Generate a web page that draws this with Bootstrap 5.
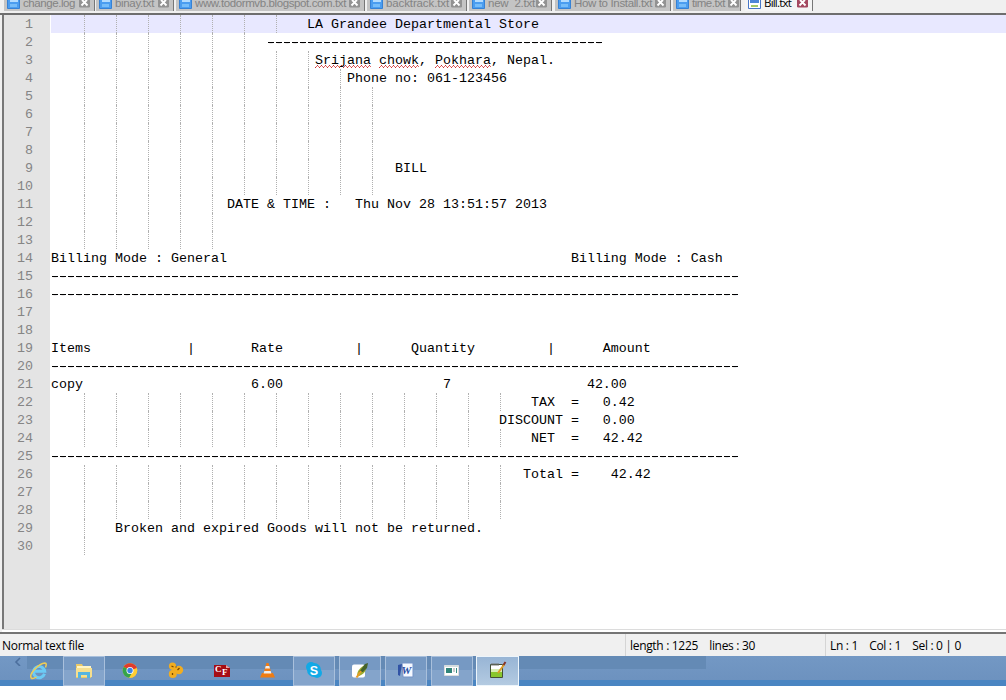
<!DOCTYPE html>
<html lang="en">
<head>
<meta charset="utf-8">
<title>Bill.txt</title>
<link href="https://cdn.jsdelivr.net/npm/bootstrap@5.3.0/dist/css/bootstrap.min.css" rel="stylesheet">
<style>
body{width:1006px;height:700px;background:#fff;font-family:"Liberation Sans",sans-serif}
.tabstrip{height:13px;background:#f0f0f0}
.ftab{height:11px;background:#c4c4c4;color:#838383;font-size:11.5px;border-right:1px solid #777;padding-left:3px;position:relative}
.ftab.on{background:#f4f4f4;color:#000;font-family:"Open Sans",sans-serif}
.ftab svg{flex:none}
.ftab .lbl{line-height:14px;margin-top:-4px;height:15px;margin-left:3px}
.ftab .x{position:absolute;right:4px;top:0}
.fit{white-space:pre;display:inline-block}
.editor{height:619px;border-top:2px solid #6e6e6e;background:#f0f0f0;padding-left:2px}
.pane{border-left:2px solid #777;background:#fff;height:614px}
.under{height:1px;background:#dcdcdc}
.under+div{height:2px;background:#fff}
.gutter{width:46px;background:#e4e4e4;color:#858585;flex:none}
.codefont{font:13.333px/20px "Liberation Mono",monospace}
.gutter div{width:29px;text-align:right;height:18px}
.src{color:#000}
.ln{height:18px;position:relative;white-space:pre;padding-left:1px}
.ln.cur{background:#e8e8ff;margin-left:1px;padding-left:0}
.guides{position:absolute;left:3px;top:0;height:18px}
.cur .guides{left:2px}
.guides i{width:32px;border-right:1px dotted #b0b0b0}
.rule{display:inline-block;height:18px;vertical-align:top;line-height:20px;background:repeating-linear-gradient(90deg,transparent 0 1px,#000 1px 7px,transparent 7px 8px) 0 9px/100% 1px no-repeat}
.sp{background:repeating-linear-gradient(90deg,#c33 0 1px,transparent 1px 4px) 0 100%/100% 1px no-repeat,repeating-linear-gradient(90deg,transparent 0 1px,#d66 1px 2px,transparent 2px 3px,#d66 3px 4px) 0 calc(100% - 1px)/100% 1px no-repeat,repeating-linear-gradient(90deg,transparent 0 2px,#c33 2px 3px,transparent 3px 4px) 0 calc(100% - 2px)/100% 1px no-repeat}
.status{height:24px;background:#f0f0f0;border-top:2px solid #747474;color:#000;font:12px/23px "Open Sans",sans-serif}
.status>div+div{border-left:1px solid #d5d5d5}
.taskbar{height:30px;background:linear-gradient(#7398c4 0,#6d92bf 24px,#4a85c2 24px);position:relative}
.shade{position:absolute;left:27px;top:0;width:679px;height:13px;background:#648ab5}
.tb{width:46px;height:30px;position:relative}
.tb.run:before{content:"";position:absolute;left:1px;top:0;width:42px;height:30px;border:1px solid #a9c0dc;background:linear-gradient(#7699c3 0 13px,#84a4cb 13px)}
.tb.sel:before{left:0;width:43px;border-color:#edf5fb;background:linear-gradient(#98b5d5,#b3cae1)}
.tb svg{position:absolute;left:14px;top:6px;overflow:visible}
</style>
</head>
<body class="d-flex flex-column overflow-hidden">
<svg width="0" height="0" class="position-absolute">
 <symbol id="disk" viewBox="0 0 13 9"><path d="M.5-3h12V8.5H.5z" fill="#4b9df0" stroke="#3682d5"/><path d="M3 0h8v2H3z" fill="#b4dcff"/><path d="M3 4h7v3H3z" fill="#76bdfa"/></symbol>
 <symbol id="diskon" viewBox="0 0 13 9"><path d="M.5-3h12V8.5H.5z" fill="#fff" stroke="#4777c8"/><path d="M2 0h9v3H2z" fill="#4e86d8"/><path d="M3 5h7v2H3z" fill="#a4c86a"/></symbol>
 <symbol id="close" viewBox="0 0 11 8"><path d="M.5-3h10V7H.5z" fill="currentColor" stroke="currentColor"/><path d="M2.500 5.500 5.500 2.300 8.500 5.500M3 0l2.500 2.300L8 0" fill="none" stroke="#fff" stroke-width="1.900"/></symbol>
</svg>
<nav class="tabstrip d-flex flex-shrink-0" id="tabs"></nav>
<main class="editor flex-shrink-0">
 <div class="pane d-flex codefont">
  <div class="gutter" id="nums"></div>
  <div class="src flex-grow-1" id="src"></div>
 </div>
 <div class="under"></div><div></div>
</main>
<footer class="status d-flex flex-shrink-0">
 <div style="width:625px;padding-left:2px"><span class="fit" data-w="82">Normal text file</span></div>
 <div style="width:200px;padding-left:4px"><span class="fit" data-w="125">length : 1225    lines : 30</span></div>
 <div style="padding-left:4px"><span class="fit" data-w="131">Ln : 1    Col : 1    Sel : 0 | 0</span></div>
</footer>
<div class="taskbar d-flex flex-shrink-0">
 <div class="shade"></div>
 <div style="width:16px" class="position-relative"><svg width="8" height="9" style="position:absolute;left:14px;top:1px"><path d="M6 1 2 5l4 4" fill="none" stroke="#4c6f9d" stroke-width="1.6"/></svg></div>
 <div class="tb"><svg width="17" height="18"><path d="M14.500 11.800A5.600 5.600 0 1 1 14.700 9.300H5" fill="none" stroke="#6ccbf5" stroke-width="3"/><path d="M1.500 16.500C-2 12 9 1.500 15 1q2.200 0 .5 4.500M1.500 16.500q2 .5 5-1.500" fill="none" stroke="#f0cd55" stroke-width="1.500"/></svg></div>
 <div class="tb run"><svg width="17" height="17"><path d="M0 2h6l1 2h8v12H0z" fill="#e9c968"/><path d="M1 4h14v3H1z" fill="#fff5c5"/><path d="M0 6h16v9H0z" fill="#f6df8e"/><path d="M2 16v-6h12v6h-3v-3H5v3z" fill="#56b5e0"/></svg></div>
 <div class="tb"><svg width="16" height="17" viewBox="0 0 16 16"><circle cx="8" cy="8" r="7.300" fill="#fc3"/><path d="M8 8 1.700 4.300A7.300 7.300 0 0 1 14.900 5.500z" fill="#df3c2d"/><path d="M8 8 1.700 4.300A7.300 7.300 0 0 0 7.200 15.300L11 10z" fill="#34a44b"/><path d="M8 8h7.200A7.300 7.300 0 0 1 7.200 15.300l3.500-6z" fill="#fc3"/><circle cx="8" cy="8" r="3.500" fill="#fff"/><circle cx="8" cy="8" r="2.700" fill="#3c82e6"/></svg></div>
 <div class="tb"><svg width="16" height="17"><path d="M3 2 12 8 4 13z" fill="#f2ad20"/><g fill="#f2ad20"><circle cx="4.500" cy="4" r="3.600"/><circle cx="11" cy="8" r="4.200"/><circle cx="4.800" cy="12" r="4"/></g><path d="M3.500 4l2 1M4.500 13v-2M9.500 8l2-2M8 4.500v1" stroke="#754800" stroke-width="1.300"/></svg></div>
 <div class="tb"><svg width="17" height="17"><path d="M0 3h12l4 3v9H0z" fill="#a60d14"/><path d="M12 3v3h4z" fill="#e9a5a5"/><text x="1" y="10" font-family="Liberation Serif,serif" font-weight="bold" font-size="9" fill="#fff">C</text><text x="8" y="13" font-family="Liberation Serif,serif" font-weight="bold" font-size="9" fill="#fff">F</text></svg></div>
 <div class="tb"><svg width="16" height="17"><path d="M2 11h11l2 4.500H0z" fill="#ef7c12"/><path d="M6.500 1h2l3.500 12H3z" fill="#f27b11"/><path d="M5.700 4h3.600l.7 2.500H5zM4.300 9h6.400l.7 2.500H3.600z" fill="#eee"/></svg></div>
 <div class="tb run"><svg width="17" height="17"><circle cx="5" cy="5" r="5" fill="#12a9e6"/><circle cx="11" cy="11" r="5" fill="#12a9e6"/><circle cx="8" cy="8" r="7" fill="#12a9e6"/><text x="3.800" y="12.500" font-family="Liberation Sans,sans-serif" font-weight="bold" font-size="12.500" fill="#fff">S</text></svg></div>
 <div class="tb run"><svg width="17" height="17"><rect y="2.500" width="13" height="13" rx="2" fill="#fff"/><path d="M5 15c0-7 3-9 9-13 1 6-1 10-9 13z" fill="#9cac2c"/><path d="M7 10l6-8 3-1-1 5-4 4z" fill="#46632b"/><path d="M4.500 15.500 9 9" stroke="#e89b26" stroke-width="2"/></svg></div>
 <div class="tb run"><svg width="17" height="17"><path d="M4 1h11v14H5z" fill="#f5f9ff" stroke="#7593c6"/><path d="M0 3l4-1-2 12-2-1z" fill="#3153a5"/><text x="3.500" y="12" font-family="Liberation Serif,serif" font-style="italic" font-weight="bold" font-size="11" fill="#274ea3">W</text></svg></div>
 <div class="tb run"><svg width="16" height="16"><path d="M.5 3.500h14v10H.5z" fill="#fff" stroke="#ddd"/><path d="M1 3h13v2H1z" fill="#d5dddf"/><path d="M2 6h6v5H2z" fill="#318579"/><path d="M9 7h2m-2 2h2" stroke="#999"/><path d="M12.500 6v5" stroke="#368b80"/></svg></div>
 <div class="tb run sel"><svg width="17" height="17"><path d="M.5 2.500h12v13H.5z" fill="#fff" stroke="#434f35"/><path d="M1 8h11v7H1z" fill="#89c62d"/><path d="M1 7h11v3H1z" fill="#d9edb4"/><path d="M2 1v3m2-3v3m2-3v3m2-3v3" stroke="#777"/><path d="M8 11 14.500 2" stroke="#dd9b28" stroke-width="2"/><path d="M13.500 3l2-3" stroke="#873326" stroke-width="2"/></svg></div>
</div>
<script src="https://cdn.jsdelivr.net/npm/bootstrap@5.3.0/dist/js/bootstrap.bundle.min.js"></script>
<script>
// label, left edge, right edge, label width
const tabs=[["change.log",4,95,52],["binay.txt",96,174,39],["www.todormvb.blogspot.com.txt",176,365,151],["backtrack.txt",367,467,63],["new  2.txt",469,552,47],["How to Install.txt",555,671,78],["time.txt",673,741,33],["Bill.txt",745,813,27]];
let edge=0;
document.getElementById("tabs").innerHTML=tabs.map(([t,l,r,w],i)=>{
  const on=i===7, s=`<div class="ftab d-flex ${on?"on":""}" style="width:${r-l}px;margin-left:${l-edge}px"><svg width="13" height="9"><use href="#${on?"diskon":"disk"}" width="13" height="9"/></svg><span class="fit lbl" data-w="${w}">${t}</span><svg class="x" style="color:${on?"#a44860":"#929292"};${i===6?"right:1px":""}" width="11" height="8"><use href="#close" width="11" height="8"/></svg></div>`;
  edge=r; return s;}).join("");
const rule=n=>`<span class="rule">${"-".repeat(n)}</span>`, sp=w=>`<span class="sp">${w}</span>`;
const at=(...p)=>{let c=0,o="";for(let i=0;i<p.length;i+=2){o+=" ".repeat(p[i]-c)+p[i+1];c=p[i]+p[i+1].length;}return o;};
// indent guides, text
const lines=[[7,at(32,"LA Grandee Departmental Store")],[6," ".repeat(27)+rule(42)],
[8," ".repeat(33)+sp("Srijana")+" "+sp("chowk")+", "+sp("Pokhara")+", Nepal."],[9,at(37,"Phone no: 061-123456")],
[10,""],[10,""],[10,""],[10,""],[10,at(43,"BILL")],[10,""],
[5,at(22,"DATE & TIME :",38,"Thu Nov 28 13:51:57 2013").replace("&","&amp;")],[5,""],[5,""],
[0,at(0,"Billing Mode : General",65,"Billing Mode : Cash")],[0,rule(86)],[0,rule(86)],[0,""],[0,""],
[0,at(0,"Items",17,"|",25,"Rate",38,"|",45,"Quantity",62,"|",69,"Amount")],[0,rule(86)],
[0,at(0,"copy",25,"6.00",49,"7",67,"42.00")],[14,at(60,"TAX",65,"=",69,"0.42")],[13,at(56,"DISCOUNT",65,"=",69,"0.00")],
[14,at(60,"NET",65,"=",69,"42.42")],[0,rule(86)],[14,at(59,"Total",65,"=",70,"42.42")],[14,""],[14,""],
[1,at(8,"Broken and expired Goods will not be returned.")],[1,""]];
document.getElementById("src").innerHTML=lines.map(([g,t],i)=>`<div class="ln${i?"":" cur"}"><div class="guides d-flex">${"<i></i>".repeat(g)}</div>${t}</div>`).join("");
document.getElementById("nums").innerHTML=lines.map((_,i)=>`<div>${i+1}</div>`).join("");
// spread the letters of each label over its width
document.querySelectorAll(".fit").forEach(e=>{e.style.letterSpacing=(e.dataset.w-e.getBoundingClientRect().width)/e.textContent.length+"px"});
</script>
</body>
</html>
